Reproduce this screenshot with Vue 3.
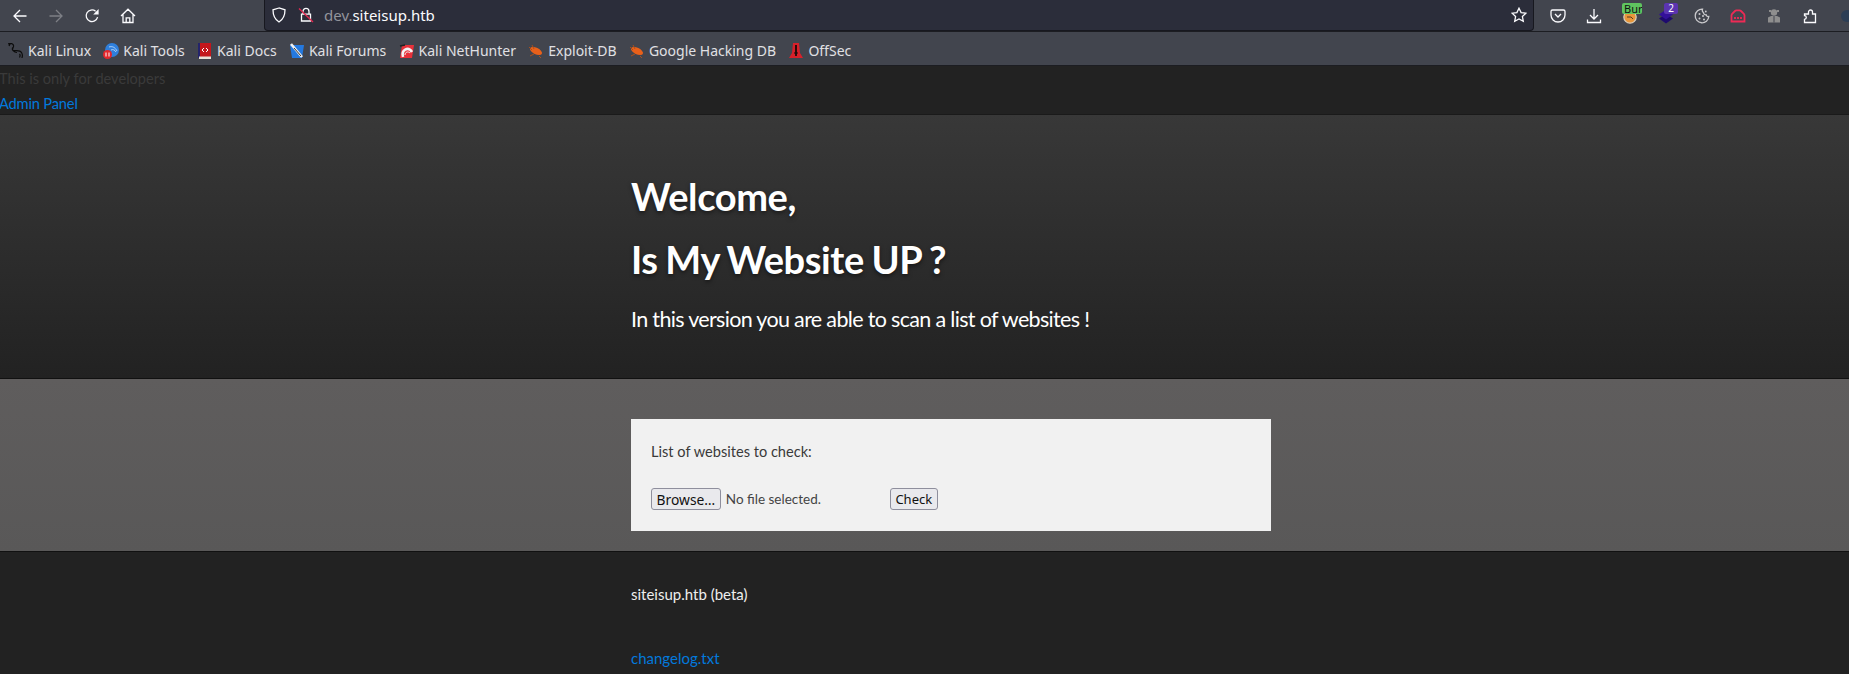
<template>
  <div class="browser">
    <div class="toolbar">
      <div class="nav">
        <svg class="ico" viewBox="0 0 16 16"><path d="M14.5 8H2M8 2 2 8l6 6" /></svg>
        <svg class="ico dim" viewBox="0 0 16 16"><path d="M1.5 8H14M8 2l6 6-6 6" /></svg>
        <svg class="ico" viewBox="0 0 16 16"><path d="M13.6 9.2A5.8 5.8 0 1 1 11.6 3.2" /><path class="solid" d="M14.6 1v5.4H9.2z" /></svg>
        <svg class="ico" viewBox="0 0 16 16"><path d="M1 8 8 1.2 15 8M3 6.6V14.5h10V6.6M6.2 14.5V9.8h3.6v4.7" /></svg>
      </div>
      <div class="urlbar">
        <svg class="ico shield" viewBox="0 0 16 16"><path d="M8 1 2 2.8c0 5.6 1.6 9.6 6 12.2 4.4-2.6 6-6.6 6-12.2z" /></svg>
        <svg class="ico lock" viewBox="0 0 16 16">
          <path d="M5 7V4.4a3 3 0 0 1 6 0V7M3.5 7.2h9V14h-9z" />
          <path class="slash" d="M1 1.5 15 15" />
        </svg>
        <span class="url"><span class="url-dim">dev.</span>siteisup.htb</span>
        <svg class="ico star" viewBox="0 0 16 16"><path d="m8 1.2 2.1 4.4 4.8.6-3.5 3.3.9 4.8L8 12l-4.3 2.3.9-4.8L1.1 6.2l4.8-.6z" /></svg>
      </div>
      <div class="addons">
        <svg class="ico" viewBox="0 0 16 16"><path d="M2.5 2h11A1.5 1.5 0 0 1 15 3.5V7A7 7 0 0 1 1 7V3.5A1.5 1.5 0 0 1 2.5 2z" /><path d="m5 6 3 3 3-3" /></svg>
        <svg class="ico" viewBox="0 0 16 16"><path d="M8 1v9.5M4 7l4 4 4-4M1.5 11.5v3h13v-3" /></svg>
        <div class="addon">
          <svg viewBox="0 0 16 16" class="raw"><circle cx="8" cy="9" r="6.2" fill="#e8963a" stroke="#d8d0c0" stroke-width="1.2" /><path d="M5 9h4l2 2" fill="none" stroke="#5a3a20" /></svg>
          <span class="badge green">Burp</span>
        </div>
        <div class="addon">
          <svg viewBox="0 0 16 16" class="raw"><path d="M8 6 15 10.5 8 15.5 1 10.5z" fill="#1e0a6e" /><path d="M8 1.5 15 6.5 8 11.5 1 6.5z" fill="#33109a" /></svg>
          <span class="badge purple">2</span>
        </div>
        <svg class="ico cookie" viewBox="0 0 16 16">
          <path d="M8.5 1.2A6.8 6.8 0 1 0 14.800 8.5c-1.3.3-2.400-.4-2.600-1.700-1.600.2-2.800-.8-2.700-2.400-1.100-.3-1.500-1.700-1-3.200z" />
          <g class="solid"><circle cx="5.5" cy="6" r="1" /><circle cx="9" cy="8" r="1" /><circle cx="5.5" cy="10.5" r="1" /><circle cx="10" cy="11.5" r="1" /><circle cx="11.8" cy="3.5" r=".9" /></g>
        </svg>
        <svg class="ico red" viewBox="0 0 16 16"><path d="M1.5 13.5V7.5C1.5 6.5 2 6 2.6 5.4L5 3a2 2 0 0 1 1.5-.6h3A2 2 0 0 1 11 3l2.400 2.400c.6.6 1.100 1.100 1.100 2.100v6z" /><path d="M5 9v2M8 9v2M11 9v2" /></svg>
        <svg class="raw" viewBox="0 0 16 16"><circle cx="8" cy="4.5" r="3.2" fill="#8e8e8e" /><path d="M3 2h2v2H3zM11 2h2v2h-2z" fill="#8e8e8e" /><path d="M2 14.5V9.500L5 8h6l3 1.500v5z" fill="#8e8e8e" /><path d="M8 8v6.500" stroke="#42454e" /></svg>
        <svg class="ico" viewBox="0 0 16 16"><path d="M2.5 14.5v-3.200a1.800 1.800 0 0 0 0-3.600V6h4V4a2 2 0 0 1 4 0v2h3v8.500z" /></svg>
        <svg class="raw" viewBox="0 0 16 16"><circle cx="9" cy="8" r="6" fill="#2c3e55" /></svg>
      </div>
    </div>

    <div class="bookmarks">
      <a class="mark">
        <svg class="raw" viewBox="0 0 16 16"><path d="M0 1c3-1.500 6 0 5.500 2.500S3 7 6 7.500s6-.5 7.500 2 1 3 .5 5.500M2.500 0 1 3M5 4.500C3 6 6 9.500 9 9.500M11.500 11c1 1 .5 2.500 0 3.500" fill="none" stroke="#0c0c0c" stroke-width="1.2" /></svg>
        Kali Linux
      </a>
      <a class="mark">
        <svg class="raw" viewBox="0 0 16 16"><circle cx="9" cy="7" r="7" fill="#2f7fdc" /><path d="M6 4c3-1 6 0 8 4M8 7c2-1 4 0 5 2" stroke="#cfe3fa" fill="none" stroke-width=".8" /><circle cx="4.5" cy="11.5" r="4.5" fill="#e3262b" /><path d="M3 9.5v4M6 9.5v4" stroke="#fff" /></svg>
        Kali Tools
      </a>
      <a class="mark">
        <svg class="raw" viewBox="0 0 16 16"><rect x="2" y="0" width="12" height="15" fill="#c4161c" /><rect x="1" y="0" width="2" height="15" fill="#24246b" /><rect x="2" y="13.5" width="12" height="2.5" fill="#e8e0d8" /><path d="m7 5-2 2 2 2M9 5l2 2-2 2" stroke="#fff" fill="none" /></svg>
        Kali Docs
      </a>
      <a class="mark">
        <svg class="raw" viewBox="0 0 16 16"><path d="M1 2h14L13 15H3z" fill="#2479e0" /><path d="m2 1 11 13" stroke="#f0f0f0" stroke-width="2.6" /><path d="m5 5 7 8" stroke="#333" /></svg>
        Kali Forums
      </a>
      <a class="mark">
        <svg class="raw" viewBox="0 0 16 16"><path d="M3 2h12l-2 13H1z" fill="#e8313a" /><path d="M4 14C2 7 9 3 13 9" stroke="#f4f4f4" stroke-width="2.6" fill="none" /><path d="M6 12c0-3 3-4 5-2" stroke="#f4f4f4" fill="none" /><path d="M1 3l5-1" stroke="#222" stroke-width="1.5" /></svg>
        Kali NetHunter
      </a>
      <a class="mark">
        <svg class="raw" viewBox="0 0 16 16"><ellipse cx="8" cy="8" rx="6.5" ry="3.2" transform="rotate(25 8 8)" fill="#e9601a" /><path d="M1 4l3 3M4 2l2 4M2 13l4-2M11 13l2 2" stroke="#a8501e" /></svg>
        Exploit-DB
      </a>
      <a class="mark">
        <svg class="raw" viewBox="0 0 16 16"><ellipse cx="8" cy="8" rx="6.5" ry="3.2" transform="rotate(25 8 8)" fill="#e9601a" /><path d="M1 4l3 3M4 2l2 4M2 13l4-2M11 13l2 2" stroke="#a8501e" /></svg>
        Google Hacking DB
      </a>
      <a class="mark">
        <svg class="raw" viewBox="0 0 16 16"><path d="M5 0h6l1 10 3 5H1l3-5z" fill="#d8202a" /><path d="M8 2v11" stroke="#1a0a0a" stroke-width="1.8" /><path d="M6 10h4" stroke="#1a0a0a" /></svg>
        OffSec
      </a>
    </div>

    <div class="page">
      <p class="dev">This is only for developers</p>
      <p class="admin"><a>Admin Panel</a></p>

      <section class="hero">
        <div class="wrap">
          <h1>Welcome,<br />Is My Website UP ?</h1>
          <p class="lead">In this version you are able to scan a list of websites !</p>
        </div>
      </section>

      <section class="band">
        <form class="card wrap" @submit.prevent>
          <p>List of websites to check:</p>
          <div class="controls">
            <button type="button" class="btn">Browse…</button>
            <span class="nofile">No file selected.</span>
            <button type="submit" class="btn check">Check</button>
          </div>
        </form>
      </section>

      <footer class="foot">
        <div class="wrap">
          <p class="beta">siteisup.htb (beta)</p>
          <p class="log"><a>changelog.txt</a></p>
        </div>
      </footer>
    </div>
  </div>
</template>

<script setup>
</script>

<style>
html,
body {
  margin: 0;
  height: 674px;
  overflow: hidden;
  background: #222;
}
</style>

<style scoped>
.browser {
  width: 1849px;
  height: 674px;
  overflow: hidden;
  font-family: "Noto Sans", sans-serif;
}

svg {
  width: 16px;
  height: 16px;
  flex: none;
  display: block;
}

.ico {
  fill: none;
  stroke: #fbfbfe;
  stroke-width: 1.3;
}

.ico .solid {
  fill: #fbfbfe;
  stroke: none;
}

.dim {
  stroke: #7d7f85;
}

.toolbar {
  height: 31px;
  display: flex;
  align-items: center;
  background: #42454e;
  overflow: hidden;
}

.nav {
  display: flex;
  gap: 20px;
  flex: none;
  width: 264px;
  padding-left: 12px;
  box-sizing: border-box;
}

.urlbar {
  width: 1270px;
  height: 31px;
  box-sizing: border-box;
  flex: none;
  display: flex;
  align-items: center;
  background: #2b2d3a;
  border: 1px solid #17181f;
  border-top: none;
  border-radius: 0 0 4px 4px;
  padding: 0 6px;
}

.lock {
  margin-left: 11px;
}

.slash {
  stroke: #e22850;
}

.url {
  margin-left: 10px;
  flex: 1;
  font-size: 15px;
  color: #fbfbfe;
}

.url-dim {
  color: #93949c;
}

.addons {
  display: flex;
  flex: none;
  gap: 20px;
  padding-left: 16px;
}

.addon {
  position: relative;
  width: 16px;
  height: 16px;
}

.badge {
  position: absolute;
  top: -5px;
  height: 11px;
  line-height: 11px;
  font-size: 10px;
}

.green {
  left: 0;
  width: 20px;
  padding-left: 2px;
  box-sizing: border-box;
  overflow: hidden;
  font-size: 11px;
  background: #5fc45f;
  color: #111;
  border-radius: 2px;
}

.purple {
  left: 6px;
  width: 14px;
  text-align: center;
  background: #5b34b0;
  color: #fff;
  border-radius: 2px;
}

.cookie {
  stroke: #c9c9cc;
}

.cookie .solid {
  fill: #c9c9cc;
}

.red {
  stroke: #ee2a55;
  stroke-width: 1.8;
}

.bookmarks {
  height: 35px;
  box-sizing: border-box;
  display: flex;
  align-items: center;
  gap: 12.3px;
  padding: 4px 0 0 8px;
  background: #42454e;
  border-top: 1px solid #1c1d22;
  border-bottom: 1px solid #1c1d22;
}

.mark {
  display: flex;
  align-items: center;
  gap: 4px;
  font-size: 14px;
  color: #e0e0e4;
  white-space: nowrap;
}

.page {
  background: #222;
  font-family: Lato, sans-serif;
  font-size: 15px;
}

.page p {
  margin: 0;
}

.dev {
  height: 25px;
  line-height: 26px;
  margin-left: -1px !important;
  font-size: 14.6px;
  color: #3a3a3a;
}

.admin {
  height: 23px;
  line-height: 24px;
  margin-left: -1px !important;
  font-size: 14.7px;
  letter-spacing: -0.2px;
}

a {
  color: #0279dc;
}

.wrap {
  margin-left: 631px;
  width: 640px;
  box-sizing: border-box;
}

.hero {
  height: 265px;
  box-sizing: border-box;
  padding-top: 50px;
  background: linear-gradient(#383838, #222);
  border-top: 1px solid #1a1a1a;
  border-bottom: 1px solid #111;
  color: #fff;
}

.hero h1 {
  margin: 0;
  font-size: 38px;
  font-weight: 700;
  line-height: 63px;
  letter-spacing: -0.4px;
  word-spacing: -1.2px;
  text-shadow: 0 2px 4px rgba(0, 0, 0, 0.5);
}

.lead {
  margin-top: 13px !important;
  font-size: 21.5px;
  letter-spacing: -0.67px;
  line-height: 30px;
}

.band {
  height: 172px;
  box-sizing: border-box;
  padding-top: 40px;
  background: linear-gradient(#5f5d5d, #595858);
}

.card {
  height: 112px;
  padding: 24px 20px 0;
  background: #f1f1f1;
  color: #3a3a3a;
  font-size: 14.6px;
}

.controls {
  display: flex;
  align-items: center;
  margin-top: 28px;
}

.btn {
  height: 22px;
  padding: 0 4.6px;
  font: 13.8px "Noto Sans", sans-serif;
  color: #111;
  background: #e9e9ed;
  border: 1px solid #8f8f9d;
  border-radius: 3px;
}

.check {
  font-size: 13px;
}

.nofile {
  width: 169px;
  box-sizing: border-box;
  padding-left: 5px;
  font-size: 13.5px;
  color: #444;
}

.foot {
  border-top: 1px solid #111;
  height: 124px;
  background: #222;
}

.beta {
  padding-top: 32px;
  line-height: 20px;
  color: #eee;
  font-size: 15px;
}

.log {
  margin-top: 44px !important;
  line-height: 20px;
}
</style>
